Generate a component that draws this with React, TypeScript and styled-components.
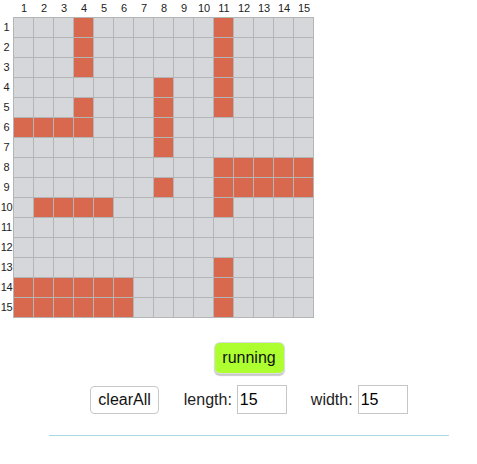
import React from "react";
import styled, { createGlobalStyle } from "styled-components";

const Global = createGlobalStyle`
  html, body { margin: 0; padding: 0; background: #fff; }
  body { font-family: "Liberation Sans", Arial, sans-serif; color: #111; }
`;

const N = 15;
const filled: Record<number, number[]> = {
  1: [4, 11],
  2: [4, 11],
  3: [4, 11],
  4: [8, 11],
  5: [4, 8, 11],
  6: [1, 2, 3, 4, 8],
  7: [8],
  8: [11, 12, 13, 14, 15],
  9: [8, 11, 12, 13, 14, 15],
  10: [2, 3, 4, 5, 11],
  11: [],
  12: [],
  13: [11],
  14: [1, 2, 3, 4, 5, 6, 11],
  15: [1, 2, 3, 4, 5, 6, 11],
};

const Page = styled.div`
  display: flex;
  flex-direction: column;
`;

const Board = styled.div`
  display: grid;
  grid-template-columns: 13px 301px;
  grid-template-rows: 17px 301px;
`;

const ColHeader = styled.div`
  grid-column: 2;
  display: grid;
  grid-template-columns: repeat(15, 20px);
  padding-left: 1px;
`;

const RowHeader = styled.div`
  grid-row: 2;
  display: grid;
  grid-template-rows: repeat(15, 20px);
  padding-top: 1px;
`;

const Label = styled.span<{ $row?: boolean }>`
  font-size: 11px;
  line-height: ${(p) => (p.$row ? "19px" : "17px")};
  text-align: center;
  color: #222;
  letter-spacing: ${(p) => (p.$row ? "-0.3px" : "0")};
  white-space: nowrap;
`;

const Grid = styled.div`
  display: grid;
  grid-template-columns: repeat(15, 19px);
  grid-template-rows: repeat(15, 19px);
  gap: 1px;
  padding: 1px;
  background: #b4b5b7;
`;

const Cell = styled.div<{ $on: boolean }>`
  background: ${(p) => (p.$on ? "#d8694f" : "#d6d7db")};
`;

const Controls = styled.div`
  width: 400px;
  margin-left: 49px;
  display: flex;
  flex-direction: column;
  align-items: center;
`;

const RunButton = styled.button`
  margin-top: 25px;
  width: 69px;
  height: 30px;
  border: none;
  border-radius: 5px;
  background: #adff2f;
  box-shadow: 0 0 0 1px #dcdcdc, 0 2px 1px 1px #c9c9c9;
  font-family: "Liberation Sans", Arial, sans-serif;
  font-size: 16px;
  color: #111;
  padding: 0;
  cursor: pointer;
`;

const Row = styled.div`
  margin-top: 12px;
  display: flex;
  align-items: center;
  font-size: 16px;
`;

const ClearButton = styled.button`
  height: 28px;
  padding: 0 7px;
  border: 1px solid #c9c9c9;
  border-radius: 4px;
  background: #fff;
  font-family: "Liberation Sans", Arial, sans-serif;
  font-size: 16px;
  color: #111;
  margin-right: 25px;
`;

const Field = styled.label<{ $gap?: number }>`
  display: flex;
  align-items: center;
  gap: 5px;
  margin-left: ${(p) => p.$gap ?? 0}px;
  color: #222;
`;

const Input = styled.input`
  width: 50px;
  height: 29px;
  box-sizing: border-box;
  border: 1px solid #c6c6c6;
  padding: 0 2px;
  font-family: "Liberation Sans", Arial, sans-serif;
  font-size: 16px;
  color: #000;
  outline: none;
`;

const Divider = styled.div`
  width: 400px;
  height: 1px;
  margin-top: 21px;
  background: #a6d9e3;
`;

export default function App() {
  const idx = Array.from({ length: N }, (_, i) => i + 1);
  return (
    <Page>
      <Global />
      <Board>
        <ColHeader>
          {idx.map((c) => (
            <Label key={c}>{c}</Label>
          ))}
        </ColHeader>
        <RowHeader>
          {idx.map((r) => (
            <Label key={r} $row>
              {r}
            </Label>
          ))}
        </RowHeader>
        <Grid>
          {idx.map((r) =>
            idx.map((c) => (
              <Cell key={`${r}-${c}`} $on={filled[r].includes(c)} />
            ))
          )}
        </Grid>
      </Board>
      <Controls>
        <RunButton>running</RunButton>
        <Row>
          <ClearButton>clearAll</ClearButton>
          <Field>
            length:
            <Input defaultValue="15" />
          </Field>
          <Field $gap={24}>
            width:
            <Input defaultValue="15" />
          </Field>
        </Row>
        <Divider />
      </Controls>
    </Page>
  );
}
